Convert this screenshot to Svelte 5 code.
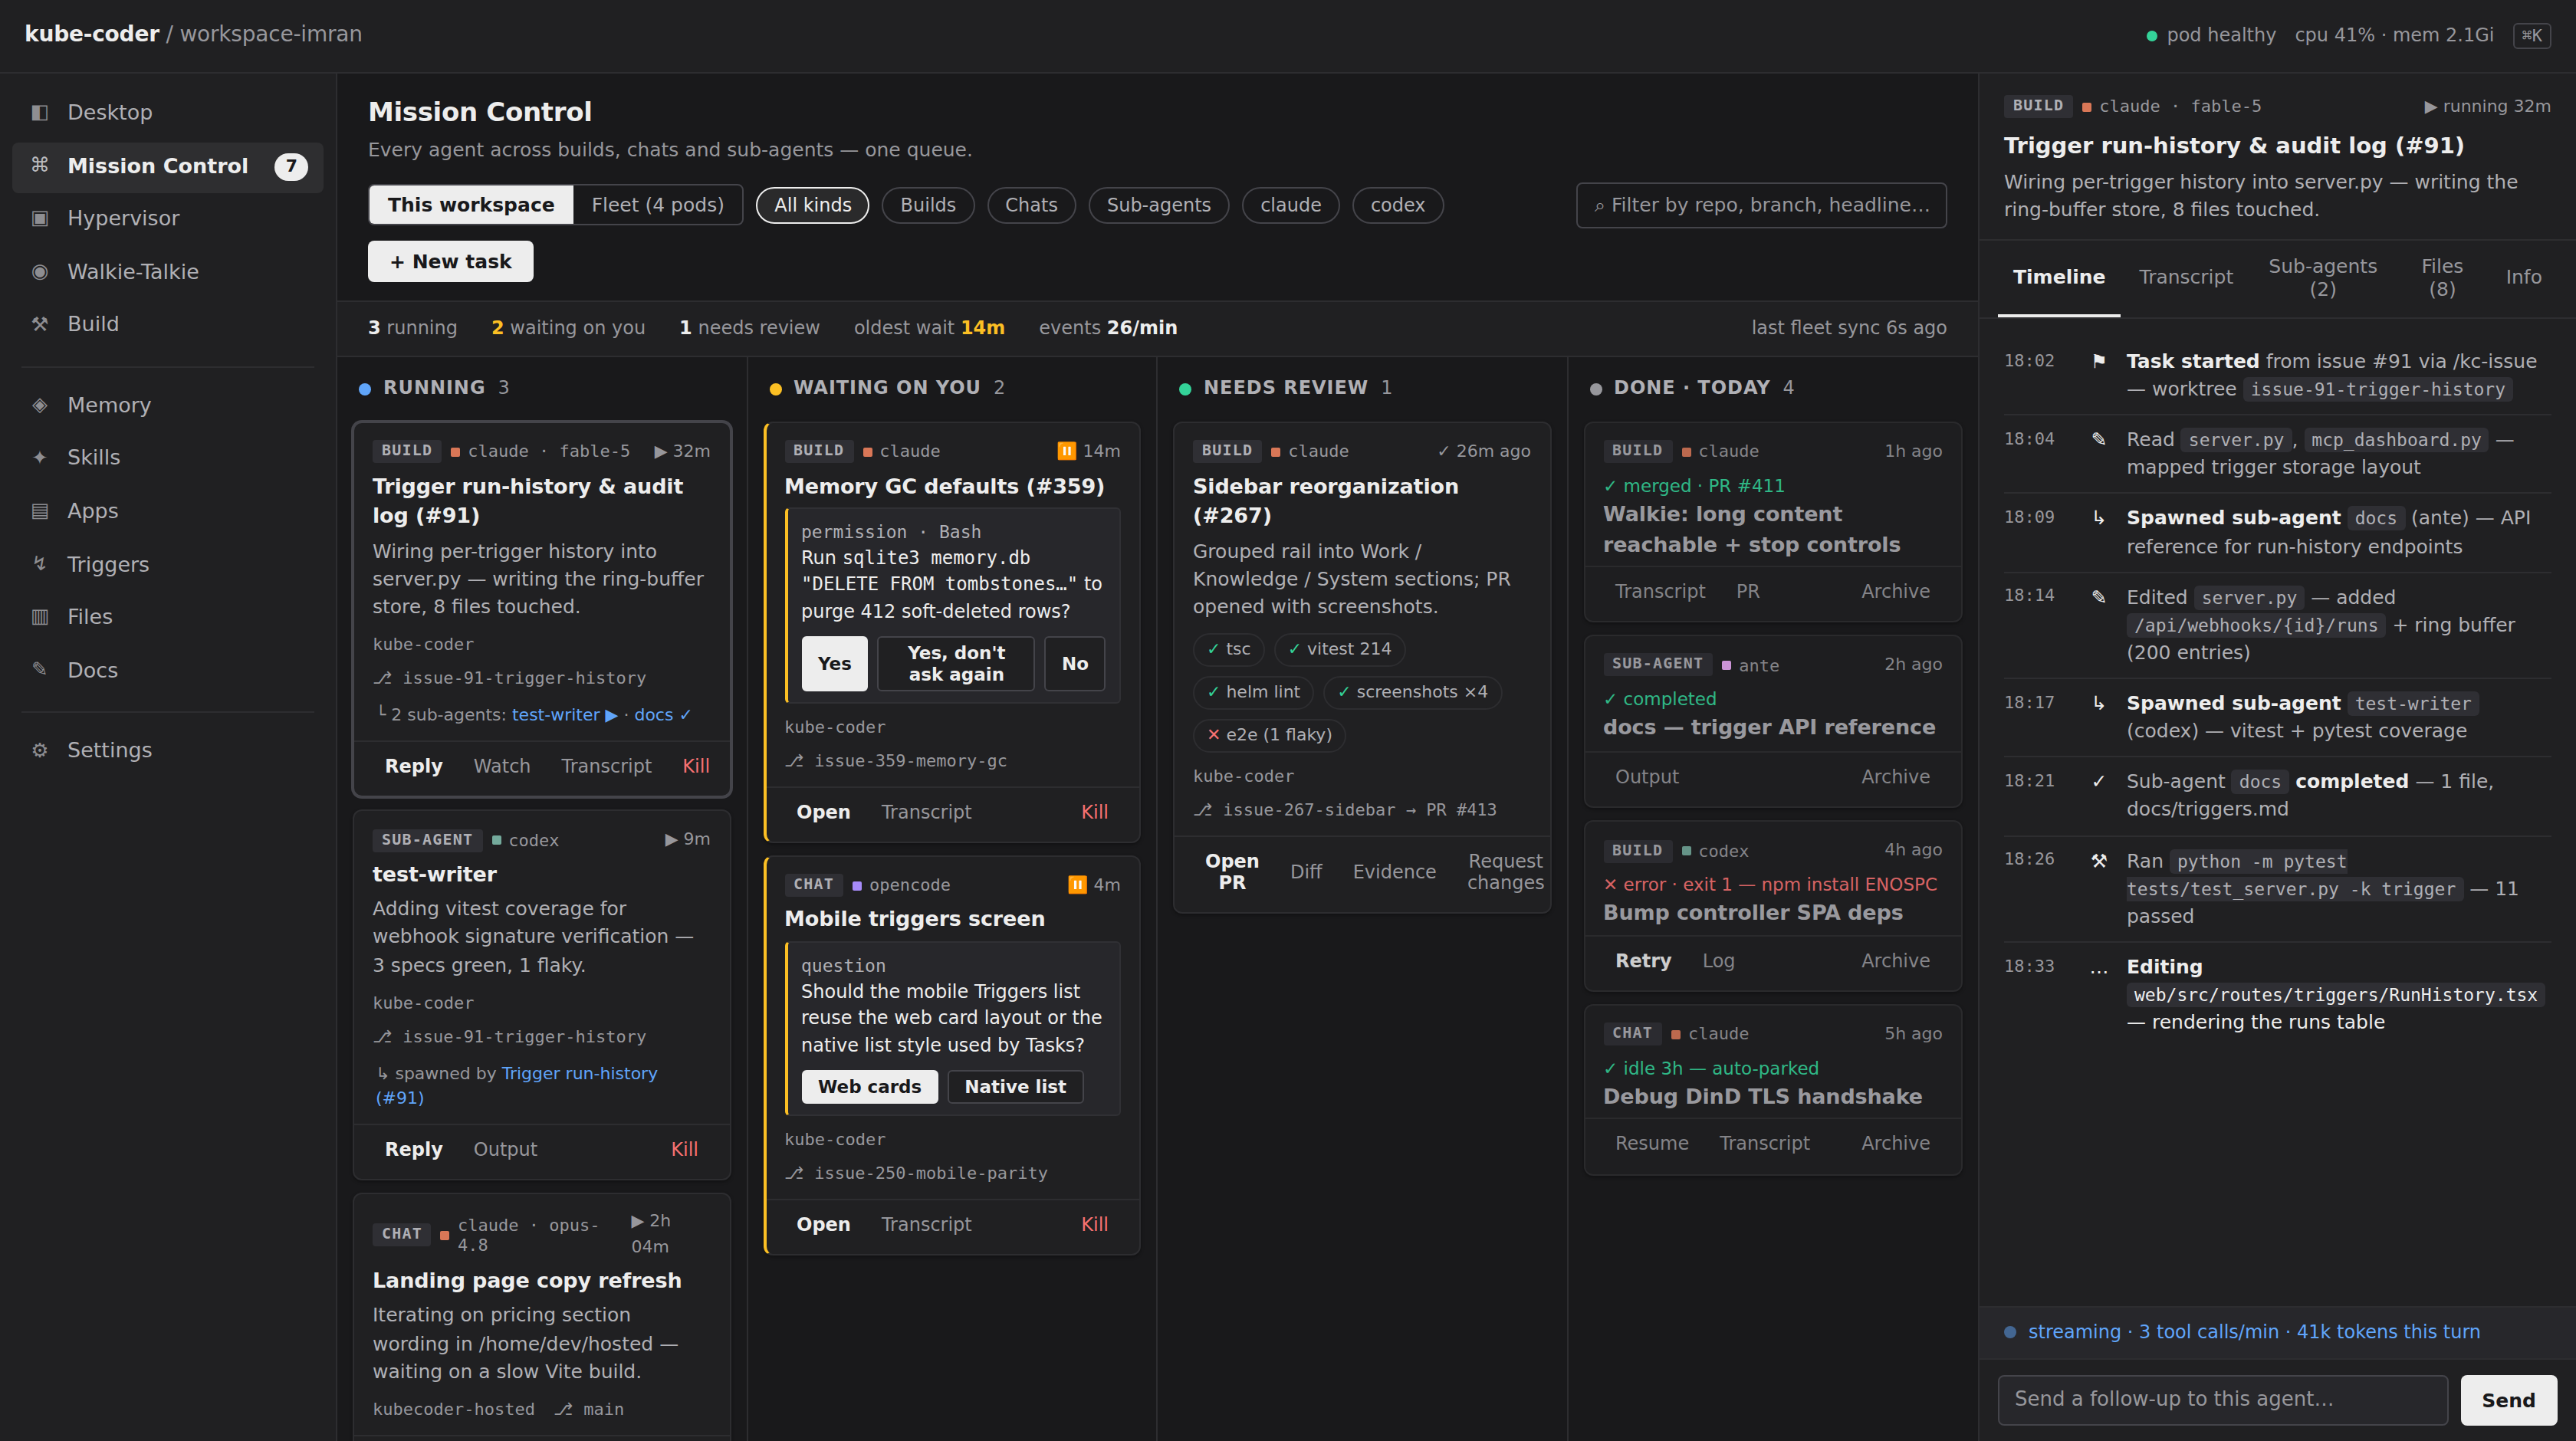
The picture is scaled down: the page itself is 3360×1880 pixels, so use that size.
<script>
  const nav = [
    [
      { glyph: '◧', label: 'Desktop' },
      { glyph: '⌘', label: 'Mission Control', count: 7, active: true },
      { glyph: '▣', label: 'Hypervisor' },
      { glyph: '◉', label: 'Walkie-Talkie' },
      { glyph: '⚒', label: 'Build' }
    ],
    [
      { glyph: '◈', label: 'Memory' },
      { glyph: '✦', label: 'Skills' },
      { glyph: '▤', label: 'Apps' },
      { glyph: '↯', label: 'Triggers' },
      { glyph: '▥', label: 'Files' },
      { glyph: '✎', label: 'Docs' }
    ],
    [{ glyph: '⚙', label: 'Settings' }]
  ];

  const kinds = ['All kinds', 'Builds', 'Chats', 'Sub-agents', 'claude', 'codex'];

  const columns = [
    {
      title: 'Running', tone: 'blue', count: 3,
      cards: [
        {
          kind: 'Build', agent: 'claude', model: ' · fable-5', time: '▶ 32m', selected: true,
          title: 'Trigger run-history & audit log (#91)',
          desc: 'Wiring per-trigger history into server.py — writing the ring-buffer store, 8 files touched.',
          meta: ['kube-coder', '⎇ issue-91-trigger-history'],
          related: [['', '└ 2 sub-agents: '], ['link', 'test-writer ▶'], ['', ' · '], ['link', 'docs ✓']],
          actions: ['Reply', 'Watch', 'Transcript'], primary: true, last: 'Kill'
        },
        {
          kind: 'Sub-agent', agent: 'codex', time: '▶ 9m',
          title: 'test-writer',
          desc: 'Adding vitest coverage for webhook signature verification — 3 specs green, 1 flaky.',
          meta: ['kube-coder', '⎇ issue-91-trigger-history'],
          related: [['', '↳ spawned by '], ['link', 'Trigger run-history (#91)']],
          actions: ['Reply', 'Output'], primary: true, last: 'Kill'
        },
        {
          kind: 'Chat', agent: 'claude', model: ' · opus-4.8', time: '▶ 2h 04m',
          title: 'Landing page copy refresh',
          desc: 'Iterating on pricing section wording in /home/dev/hosted — waiting on a slow Vite build.',
          meta: ['kubecoder-hosted', '⎇ main'],
          actions: [], primary: true
        }
      ]
    },
    {
      title: 'Waiting on you', tone: 'amber', count: 2,
      cards: [
        {
          kind: 'Build', agent: 'claude', time: '⏸️ 14m', waiting: true,
          title: 'Memory GC defaults (#359)',
          ask: {
            label: 'permission · Bash',
            text: [['', 'Run '], ['mono', 'sqlite3 memory.db "DELETE FROM tombstones…"'], ['', ' to purge 412 soft-deleted rows?']],
            options: ['Yes', "Yes, don't ask again", 'No']
          },
          meta: ['kube-coder', '⎇ issue-359-memory-gc'],
          actions: ['Open', 'Transcript'], primary: true, last: 'Kill'
        },
        {
          kind: 'Chat', agent: 'opencode', time: '⏸️ 4m', waiting: true,
          title: 'Mobile triggers screen',
          ask: {
            label: 'question',
            text: [['', 'Should the mobile Triggers list reuse the web card layout or the native list style used by Tasks?']],
            options: ['Web cards', 'Native list']
          },
          meta: ['kube-coder', '⎇ issue-250-mobile-parity'],
          actions: ['Open', 'Transcript'], primary: true, last: 'Kill'
        }
      ]
    },
    {
      title: 'Needs review', tone: 'green', count: 1,
      cards: [
        {
          kind: 'Build', agent: 'claude', time: '✓ 26m ago',
          title: 'Sidebar reorganization (#267)',
          desc: 'Grouped rail into Work / Knowledge / System sections; PR opened with screenshots.',
          checks: [['✓', 'tsc'], ['✓', 'vitest 214'], ['✓', 'helm lint'], ['✓', 'screenshots ×4'], ['✕', 'e2e (1 flaky)']],
          meta: ['kube-coder', '⎇ issue-267-sidebar → PR #413'],
          actions: ['Open PR', 'Diff', 'Evidence', 'Request changes'], primary: true
        }
      ]
    },
    {
      title: 'Done · today', tone: 'grey', count: 4,
      cards: [
        {
          kind: 'Build', agent: 'claude', time: '1h ago', done: true, status: '✓ merged · PR #411',
          title: 'Walkie: long content reachable + stop controls',
          actions: ['Transcript', 'PR'], last: 'Archive'
        },
        {
          kind: 'Sub-agent', agent: 'ante', time: '2h ago', done: true, status: '✓ completed',
          title: 'docs — trigger API reference',
          actions: ['Output'], last: 'Archive'
        },
        {
          kind: 'Build', agent: 'codex', time: '4h ago', done: true, failed: true,
          status: '✕ error · exit 1 — npm install ENOSPC',
          title: 'Bump controller SPA deps',
          actions: ['Retry', 'Log'], primary: true, last: 'Archive'
        },
        {
          kind: 'Chat', agent: 'claude', time: '5h ago', done: true, status: '✓ idle 3h — auto-parked',
          title: 'Debug DinD TLS handshake',
          actions: ['Resume', 'Transcript'], last: 'Archive'
        }
      ]
    }
  ];

  const tabs = ['Timeline', 'Transcript', 'Sub-agents (2)', 'Files (8)', 'Info'];

  const timeline = [
    { at: '18:02', icon: '⚑', text: [['strong', 'Task started'], ['', ' from issue #91 via /kc-issue — worktree '], ['code', 'issue-91-trigger-history']] },
    { at: '18:04', icon: '✎', text: [['', 'Read '], ['code', 'server.py'], ['', ', '], ['code', 'mcp_dashboard.py'], ['', ' — mapped trigger storage layout']] },
    { at: '18:09', icon: '↳', text: [['strong', 'Spawned sub-agent'], ['', ' '], ['code', 'docs'], ['', ' (ante) — API reference for run-history endpoints']] },
    { at: '18:14', icon: '✎', text: [['', 'Edited '], ['code', 'server.py'], ['', ' — added '], ['code', '/api/webhooks/{id}/runs'], ['', ' + ring buffer (200 entries)']] },
    { at: '18:17', icon: '↳', text: [['strong', 'Spawned sub-agent'], ['', ' '], ['code', 'test-writer'], ['', ' (codex) — vitest + pytest coverage']] },
    { at: '18:21', icon: '✓', text: [['', 'Sub-agent '], ['code', 'docs'], ['', ' '], ['strong', 'completed'], ['', ' — 1 file, docs/triggers.md']] },
    { at: '18:26', icon: '⚒', text: [['', 'Ran '], ['code', 'python -m pytest tests/test_server.py -k trigger'], ['', ' — 11 passed']] },
    { at: '18:33', icon: '…', live: true, text: [['strong', 'Editing'], ['', ' '], ['code', 'web/src/routes/triggers/RunHistory.tsx'], ['', ' — rendering the runs table']] }
  ];
</script>

{#snippet rich(parts)}{#each parts as [cls, text]}<span class={cls}>{text}</span>{/each}{/snippet}

{#snippet head(kind, agent, model, time)}
  <div class="head {agent}">
    <span class="kind">{kind}</span>
    <span class="agent"><i class="swatch"></i><span class="agent-name">{agent}{model ?? ''}</span></span>
    <span class="time">{time}</span>
  </div>
{/snippet}

<div class="screen">
  <div class="app">
    <header class="topbar">
      <div class="crumbs"><b>kube-coder</b> / workspace-imran</div>
      <div class="health">
        <span class="pod"><i class="dot green"></i>pod healthy</span>
        <span>cpu 41% · mem 2.1Gi</span>
        <kbd>⌘K</kbd>
      </div>
    </header>

    <nav class="sidebar">
      {#each nav as group, i}
        {#if i > 0}<hr />{/if}
        {#each group as item}
          <div class="nav-item" class:active={item.active}>
            <span class="glyph">{item.glyph}</span>
            <span>{item.label}</span>
            {#if item.count}<span class="nav-count">{item.count}</span>{/if}
          </div>
        {/each}
      {/each}
    </nav>

    <main>
      <section class="intro">
        <h1>Mission Control</h1>
        <p>Every agent across builds, chats and sub-agents — one queue.</p>
        <div class="toolbar">
          <div class="segmented">
            <button class="on">This workspace</button>
            <button>Fleet (4 pods)</button>
          </div>
          {#each kinds as kind, i}
            <button class="pill" class:on={i === 0}>{kind}</button>
          {/each}
          <div class="filter">⌕ Filter by repo, branch, headline…</div>
          <button class="new-task">+ New task</button>
        </div>
      </section>

      <section class="stats">
        <span><b>3</b> running</span>
        <span><b class="warn">2</b> waiting on you</span>
        <span><b>1</b> needs review</span>
        <span>oldest wait <b class="warn">14m</b></span>
        <span>events <b>26/min</b></span>
        <span class="sync">last fleet sync 6s ago</span>
      </section>

      <section class="board">
        {#each columns as column}
          <div class="column">
            <h2><i class="dot {column.tone}"></i>{column.title}<span>{column.count}</span></h2>
            {#each column.cards as card}
              <article class="card" class:selected={card.selected} class:waiting={card.waiting} class:done={card.done}>
                <div class="body">
                  {@render head(card.kind, card.agent, card.model, card.time)}
                  {#if card.status}<div class="status" class:failed={card.failed}>{card.status}</div>{/if}
                  <h3>{card.title}</h3>
                  {#if card.desc}<p class="desc">{card.desc}</p>{/if}
                  {#if card.ask}
                    <div class="ask">
                      <div class="ask-label">{card.ask.label}</div>
                      <div>{@render rich(card.ask.text)}</div>
                      <div class="options">
                        {#each card.ask.options as option, i}
                          <button class:on={i === 0}>{option}</button>
                        {/each}
                      </div>
                    </div>
                  {/if}
                  {#if card.checks}
                    <div class="checks">
                      {#each card.checks as [mark, label]}
                        <span class="check"><span class={mark === '✓' ? 'pass' : 'fail'}>{mark}</span> {label}</span>
                      {/each}
                    </div>
                  {/if}
                  {#if card.meta}
                    <div class="meta">{#each card.meta as item}<span>{item}</span>{/each}</div>
                  {/if}
                  {#if card.related}<div class="related">{@render rich(card.related)}</div>{/if}
                </div>
                <footer>
                  {#each card.actions as action, i}
                    <button class:primary={card.primary && i === 0}>{action}</button>
                  {/each}
                  {#if card.last}<button class="last" class:danger={card.last === 'Kill'}>{card.last}</button>{/if}
                </footer>
              </article>
            {/each}
          </div>
        {/each}
      </section>
    </main>

    <aside class="panel">
      <div class="panel-head">
        {@render head('Build', 'claude', ' · fable-5', '▶ running 32m')}
        <h2>Trigger run-history &amp; audit log (#91)</h2>
        <p class="desc">Wiring per-trigger history into server.py — writing the ring-buffer store, 8 files touched.</p>
      </div>
      <div class="tabs">
        {#each tabs as tab, i}<button class:on={i === 0}>{tab}</button>{/each}
      </div>
      <ol class="timeline">
        {#each timeline as event}
          <li class:live={event.live}>
            <time>{event.at}</time>
            <span class="event-icon">{event.icon}</span>
            <div class="event-text">{@render rich(event.text)}</div>
          </li>
        {/each}
      </ol>
      <div class="stream"><i class="dot blue"></i>streaming · 3 tool calls/min · 41k tokens this turn</div>
      <div class="composer">
        <div class="message">Send a follow-up to this agent…</div>
        <button>Send</button>
      </div>
    </aside>
  </div>
</div>

<style>
  :global(body) {
    background: #19191b;
  }

  .screen {
    width: 3360px;
    height: 1880px;
    overflow: hidden;
  }

  /* Laid out on a 1680×940 grid and drawn at double size. */
  .app {
    --bg: #19191b;
    --surface: #202022;
    --raised: #27272b;
    --chip: #2f2f34;
    --line: #2d2d30;
    --line-strong: #44444a;
    --text: #ededed;
    --text-2: #b0b0b5;
    --text-3: #97979c;
    --blue: #60a5fa;
    --amber: #fbbf24;
    --green: #34d399;
    --red: #f87171;
    --mono: "DejaVu Sans Mono", monospace;
    width: 1680px;
    height: 940px;
    transform: scale(2);
    transform-origin: 0 0;
    display: grid;
    grid-template: 48px minmax(0, 1fr) / 220px minmax(0, 1fr) 390px;
    overflow: hidden;
    background: var(--bg);
    color: var(--text);
    font-family: "DejaVu Sans", sans-serif;
    font-size: 13.5px;
    line-height: 1.45;
  }

  .app :global(*) {
    box-sizing: border-box;
  }

  button {
    border: 0;
    padding: 0;
    background: none;
    color: inherit;
    font-family: inherit;
    line-height: normal;
  }

  h1, h2, h3, p, ol {
    margin: 0;
    padding: 0;
  }

  .dot {
    flex: none;
    width: 8px;
    height: 8px;
    border-radius: 50%;
  }
  .dot.blue { background: var(--blue); }
  .dot.amber { background: var(--amber); }
  .dot.green { background: var(--green); }
  .dot.grey { background: #97979c; }

  /* Top bar */
  .topbar {
    grid-column: 1 / -1;
    display: flex;
    align-items: center;
    justify-content: space-between;
    padding: 0 16px;
    background: var(--surface);
    border-bottom: 1px solid var(--line);
  }
  .crumbs {
    padding-bottom: 3px;
    color: var(--text-3);
    font-size: 14px;
    letter-spacing: -0.0075em;
  }
  .crumbs b { color: var(--text); }
  .health {
    display: flex;
    align-items: center;
    gap: 12px;
    color: var(--text-3);
    font-size: 12px;
  }
  .pod {
    display: flex;
    align-items: center;
    gap: 6px;
  }
  .pod .dot {
    width: 7px;
    height: 7px;
  }
  kbd {
    padding: 1px 5px;
    border: 1px solid var(--line-strong);
    border-radius: 3px;
    font: 11px var(--mono);
  }

  /* Sidebar */
  .sidebar {
    display: flex;
    flex-direction: column;
    gap: 1px;
    padding: 10px 8px;
    background: var(--surface);
    border-right: 1px solid var(--line);
  }
  .sidebar hr {
    width: calc(100% - 12px);
    height: 1px;
    margin: 8px 6px;
    border: 0;
    background: var(--line);
  }
  .nav-item {
    display: flex;
    align-items: center;
    gap: 10px;
    padding: 6px 10px 8px;
    border-radius: 4px;
    color: var(--text-2);
  }
  .nav-item.active {
    background: #2e2e30;
    color: var(--text);
    font-weight: 700;
  }
  .glyph {
    width: 16px;
    color: #8e8e92;
    font-size: 13px;
    font-weight: 400;
    text-align: center;
  }
  .active .glyph { color: #bcbcbf; }
  .nav-count {
    margin: 0 0 -2px auto;
    padding: 1px 7px;
    border-radius: 9px;
    background: var(--text);
    color: var(--bg);
    font-size: 11px;
  }

  /* Main column */
  main {
    display: flex;
    flex-direction: column;
    min-height: 0;
  }
  .intro {
    padding: 14px 20px 12px;
    border-bottom: 1px solid var(--line);
  }
  h1 {
    font-size: 17px;
    line-height: 1.3;
    letter-spacing: -0.01em;
  }
  .intro p {
    margin: 5px 0 11.5px;
    color: var(--text-3);
    font-size: 12.5px;
  }
  .toolbar {
    display: flex;
    flex-wrap: wrap;
    align-items: center;
    gap: 8px;
  }
  .segmented {
    display: flex;
    overflow: hidden;
    border: 1px solid var(--line-strong);
    border-radius: 4px;
  }
  .segmented button {
    padding: 5px 12px;
    color: var(--text-2);
    font-size: 12.5px;
  }
  .segmented .on {
    background: var(--text);
    color: var(--bg);
    font-weight: 700;
  }
  .pill {
    padding: 4px 11px;
    border: 1px solid var(--line-strong);
    border-radius: 12px;
    color: var(--text-2);
    font-size: 12px;
  }
  .pill.on {
    padding: 4px 10.7px;
    border-color: var(--text);
    background: #2a2a2b;
    color: var(--text);
  }
  .filter {
    margin-left: auto;
    padding: 5px 10px 5px 11px;
    border: 1px solid var(--line-strong);
    border-radius: 4px;
    color: var(--text-3);
    font-size: 12.5px;
  }
  .new-task {
    padding: 6px 14px;
    border-radius: 4px;
    background: var(--text);
    color: var(--bg);
    font-size: 12.5px;
    font-weight: 700;
  }
  .stats {
    display: flex;
    gap: 22px;
    padding: 9px 20px;
    background: var(--surface);
    border-bottom: 1px solid var(--line);
    color: var(--text-3);
    font-size: 12px;
  }
  .stats b { color: var(--text); }
  .stats .warn { color: var(--amber); }
  .sync { margin-left: auto; }

  /* Board */
  .board {
    display: grid;
    grid-template-columns: repeat(4, minmax(0, 1fr));
    flex: 1;
    min-height: 0;
  }
  .column {
    display: flex;
    flex-direction: column;
    gap: 8px;
    min-height: 0;
    padding: 10px;
    overflow: hidden;
    border-right: 1px solid var(--line);
  }
  .column:last-child { border-right: 0; }
  .column h2 {
    display: flex;
    align-items: center;
    gap: 8px;
    flex: none;
    padding: 2px 4px 4.5px;
    color: var(--text-2);
    font-size: 12px;
    letter-spacing: 0.04em;
    text-transform: uppercase;
  }
  .column h2 span {
    color: var(--text-3);
    font-weight: 400;
  }

  .card {
    flex: none;
    border: 1px solid var(--line);
    border-radius: 6px;
    background: var(--surface);
    box-shadow: 0 1px 2px rgba(0, 0, 0, 0.35);
  }
  .card.selected {
    border-color: var(--line-strong);
    box-shadow: 0 0 0 1px var(--line-strong);
  }
  .card.waiting { border-left: 2px solid var(--amber); }
  .card.done { opacity: 0.85; }

  .body { padding: 10px 12px 8px; }
  .done .body { padding-bottom: 3.7px; }

  .head {
    display: flex;
    align-items: center;
    gap: 6px;
    min-height: 17.4px;
    color: var(--text-3);
    font-size: 11px;
  }
  .head.claude { --agent: #d97757; }
  .head.codex { --agent: #74aa9c; }
  .head.opencode { --agent: #a78bfa; }
  .head.ante { --agent: #ecaaf8; }
  .kind {
    flex: none;
    padding: 1px 6px 3px;
    border-radius: 2px;
    background: var(--chip);
    color: var(--text-2);
    font: 700 10px var(--mono);
    letter-spacing: 0.06em;
    text-transform: uppercase;
  }
  .agent {
    display: flex;
    align-items: center;
    gap: 5px;
    font: 11px var(--mono);
  }
  .ante .agent-name { padding-top: 1px; }
  .swatch {
    flex: none;
    width: 6px;
    height: 6px;
    border-radius: 1px;
    background: var(--agent);
  }
  .time {
    margin-left: auto;
    line-height: 16.3px;
  }

  .status {
    margin-top: 5.4px;
    color: var(--green);
    font-size: 11.5px;
  }
  .status.failed { color: var(--red); }

  h3 {
    margin-top: 4px;
    font-size: 13.5px;
    letter-spacing: -0.005em;
  }
  .done h3 {
    margin-top: 0.6px;
    color: var(--text-2);
  }
  .head.ante ~ h3 {
    margin-top: 0.7px;
    margin-bottom: 1.4px;
  }
  .desc {
    margin-top: 4px;
    color: var(--text-2);
    font-size: 12.5px;
  }

  .ask {
    margin-top: 4px;
    padding: 7px 9px;
    border: 1px solid #303034;
    border-left: 2px solid var(--amber);
    border-radius: 3px;
    background: var(--raised);
    font-size: 12px;
  }
  .ask-label {
    color: var(--text-2);
    font-family: var(--mono);
    font-size: 11.5px;
  }
  .mono { font-family: var(--mono); }
  .options {
    display: flex;
    gap: 6px;
    margin-top: 7px;
  }
  .options button {
    padding: 3px 10px;
    border: 1px solid var(--line-strong);
    border-radius: 3px;
    background: var(--surface);
    font-size: 11.5px;
    font-weight: 700;
  }
  .options .on {
    border-color: var(--text);
    background: var(--text);
    color: var(--bg);
  }

  .checks {
    display: flex;
    flex-wrap: wrap;
    gap: 6px;
    margin-top: 8px;
  }
  .check {
    padding: 2px 8px;
    border: 1px solid var(--line);
    border-radius: 11px;
    color: var(--text-2);
    font-size: 11px;
  }
  .pass { color: var(--green); }
  .fail { color: var(--red); }

  .meta {
    display: flex;
    flex-wrap: wrap;
    gap: 6px 12px;
    margin-top: 8px;
    color: var(--text-3);
    font-family: var(--mono);
    font-size: 11px;
  }
  .related {
    margin-top: 8px;
    padding-left: 2px;
    color: var(--text-3);
    font-size: 11px;
    line-height: 16.2px;
  }
  .link { color: var(--blue); }

  footer {
    display: flex;
    align-items: center;
    gap: 4px;
    padding: 5px 12px 8.3px;
    border-top: 1px solid var(--line);
  }
  footer button {
    padding: 4px 8px;
    color: var(--text-3);
    font-size: 12px;
  }
  footer .primary {
    color: var(--text);
    font-weight: 700;
  }
  footer .last { margin-left: auto; }
  footer .danger { color: var(--red); }

  /* Detail panel */
  .panel {
    display: flex;
    flex-direction: column;
    min-height: 0;
    background: var(--surface);
    border-left: 1px solid var(--line);
  }
  .panel-head {
    padding: 13px 16px 9.3px;
    border-bottom: 1px solid var(--line);
  }
  .panel-head h2 {
    margin-top: 6.7px;
    font-size: 14.5px;
  }
  .tabs {
    display: flex;
    gap: 2px;
    padding: 0 12px;
    border-bottom: 1px solid var(--line);
  }
  .tabs button {
    padding: 9px 10px;
    border-bottom: 2px solid transparent;
    color: var(--text-3);
    font-size: 12.5px;
  }
  .tabs .on {
    border-color: var(--text);
    color: var(--text);
    font-weight: 700;
  }

  .timeline {
    flex: 1;
    min-height: 0;
    padding: 12.3px 16px 12px;
    list-style: none;
  }
  .timeline li {
    display: grid;
    grid-template-columns: 44px 16px minmax(0, 1fr);
    gap: 10px;
    padding: 7px 0;
    border-bottom: 1px solid var(--line);
    color: var(--text-2);
    font-size: 12.5px;
  }
  .timeline li:last-child { border-bottom: 0; }
  .timeline li.live { color: var(--text); }
  time {
    padding-top: 0.8px;
    color: var(--text-3);
    font-family: var(--mono);
    font-size: 11px;
  }
  .event-icon {
    color: var(--text);
    text-align: center;
  }
  .strong {
    color: var(--text);
    font-weight: 700;
  }
  .code {
    padding: 1px 5px;
    border-radius: 3px;
    background: var(--chip);
    font-family: var(--mono);
    font-size: 11.5px;
  }

  .stream {
    display: flex;
    align-items: center;
    gap: 8px;
    padding: 8px 16px;
    border-top: 1px solid var(--line);
    background: var(--raised);
    color: var(--blue);
    font-size: 12px;
  }
  .stream .dot { opacity: 0.5; }
  .composer {
    display: flex;
    gap: 8px;
    padding: 10px 12px;
    border-top: 1px solid var(--line);
  }
  .message {
    flex: 1;
    padding: 6px 10px;
    border: 1px solid var(--line-strong);
    border-radius: 4px;
    background: var(--raised);
    color: var(--text-3);
    font-size: 13px;
  }
  .composer button {
    padding: 0 14px;
    border-radius: 4px;
    background: var(--text);
    color: var(--bg);
    font-size: 12.5px;
    font-weight: 700;
  }
</style>
